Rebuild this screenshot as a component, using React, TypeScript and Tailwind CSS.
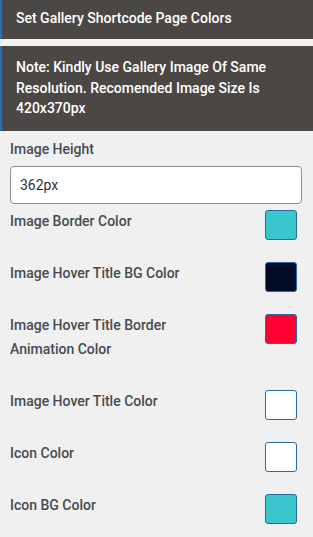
const colorFields = [
	{ label: "Image Border Color", color: "bg-[#3ac6ce]" },
	{ label: "Image Hover Title BG Color", color: "bg-[#000b26]" },
	{ label: "Image Hover Title Border Animation Color", color: "bg-[#ff0033]" },
	{ label: "Image Hover Title Color", color: "bg-white" },
	{ label: "Icon Color", color: "bg-white" },
	{ label: "Icon BG Color", color: "bg-[#3ac6ce]" },
];

const App = () => {
	return (
		<div className="min-h-[537px] w-[313px] bg-[#f0f0f0] font-['Roboto',sans-serif] overflow-hidden">
			{/* Section header */}
			<div className="bg-[#4b4745] border-l-2 border-[#1e73be] pl-[14px] pt-[8px] pb-[11px] text-[14px] leading-[20px] font-medium text-white">
				Set Gallery Shortcode Page Colors
			</div>

			{/* Note */}
			<div className="mt-[7px] bg-[#4b4745] border-l-2 border-[#1e73be] pl-[14px] pr-3 pt-[11px] pb-[12px] text-[14px] leading-[20.5px] font-medium text-white">
				Note: Kindly Use Gallery Image Of Same Resolution. Recomended Image Size Is 420x370px
			</div>

			<div className="px-[10px] pt-[6px]">
				<label className="block text-[14px] leading-[24px] font-medium text-[#464b50]">
					Image Height
				</label>
				<input
					type="text"
					defaultValue="362px"
					className="mt-[5px] w-[292px] h-[38px] rounded-[4px] border border-[#8c8f94] bg-white px-[9px] text-[14px] text-[#2c3338] outline-none"
				/>

				<div className="mt-[5px]">
					{colorFields.map((field, index) => (
						<div key={index} className="flex items-start justify-between">
							<span className="w-[190px] pb-[28px] text-[14px] leading-[24px] font-medium text-[#464b50]">
								{field.label}
							</span>
							<span
								className={`mt-[1px] mr-[6px] block w-[32px] h-[30px] rounded-[3px] border border-[#2b6a9a] ${field.color}`}
							/>
						</div>
					))}
				</div>
			</div>
		</div>
	);
};

export default App;
